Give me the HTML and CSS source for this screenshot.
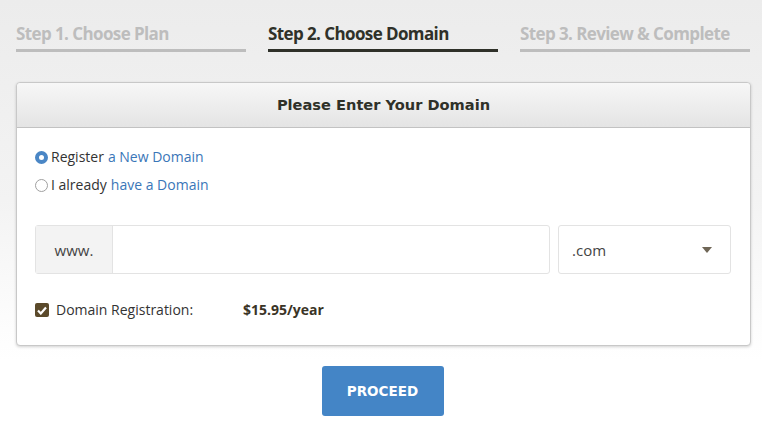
FILE: index.html
```html
<!DOCTYPE html>
<html>
<head>
<meta charset="utf-8">
<link rel="stylesheet" href="styles.css">
</head>
<body>
<div class="page">
  <nav class="steps">
    <div class="step">Step 1. Choose Plan</div>
    <div class="step active">Step 2. Choose Domain</div>
    <div class="step">Step 3. Review &amp; Complete</div>
  </nav>
  <section class="panel">
    <header class="panel-head">Please Enter Your Domain</header>
    <div class="panel-body">
      <div class="options">
        <label class="opt"><span class="radio checked"></span>Register <span class="link">a New Domain</span></label>
        <label class="opt"><span class="radio"></span>I already <span class="link">have a Domain</span></label>
      </div>
      <div class="domain-row">
        <div class="input-group">
          <span class="addon">www.</span>
          <span class="field"></span>
        </div>
        <div class="select">
          <span>.com</span>
          <svg class="caret" width="10" height="6" viewBox="0 0 10 6"><path d="M0 0h10L5 6z" fill="#6f6656"/></svg>
        </div>
      </div>
      <div class="reg-row">
        <span class="checkbox"><svg width="10" height="9" viewBox="0 0 10 9"><path d="M1 4.5l2.8 3L9 1.5" fill="none" stroke="#fff" stroke-width="2.2"/></svg></span>
        <span class="reg-label">Domain Registration:</span>
        <span class="price">$15.95/year</span>
      </div>
    </div>
  </section>
  <div class="actions">
    <button class="proceed">PROCEED</button>
  </div>
</div>
</body>
</html>
```
FILE: styles.css
```css
* { box-sizing: border-box; }
html, body { margin: 0; padding: 0; }
body {
  width: 762px;
  height: 425px;
  overflow: hidden;
  font-family: "Open Sans", "Liberation Sans", sans-serif;
  background: linear-gradient(to bottom, #ececec 0px, #f3f3f3 200px, #fdfdfd 330px, #ffffff 360px);
  color: #333;
}
.page { padding: 0 12px 0 16px; }
.steps {
  display: flex;
  gap: 22px;
  padding-top: 23px;
}
.step {
  width: 230px;
  font-weight: 700;
  font-size: 17px;
  letter-spacing: -0.6px;
  color: #bdbdbd;
  padding-bottom: 5px;
  border-bottom: 3px solid #bdbdbd;
  line-height: 21px;
  white-space: nowrap;
}
.step.active { color: #2f3129; border-bottom-color: #2f3129; }
.panel {
  margin-top: 30px;
  width: 735px;
  background: #fff;
  border: 1px solid #c8c8c8;
  border-radius: 4px;
  box-shadow: 0 1px 3px rgba(0,0,0,0.18);
}
.panel-head {
  height: 45px;
  background: linear-gradient(to bottom, #f7f7f7, #e4e4e4);
  border-bottom: 1px solid #c2c2c2;
  border-radius: 4px 4px 0 0;
  text-align: center;
  font-family: "DejaVu Sans", sans-serif;
  font-weight: 700;
  font-size: 14.6px;
  line-height: 44px;
  color: #2f3129;
}
.panel-body { padding: 19px 18px 25px 18px; }
.options { display: flex; flex-direction: column; gap: 8px; }
.opt {
  display: flex;
  align-items: center;
  font-size: 14px;
  line-height: 20px;
  color: #333;
}
.link { color: #3a76b8; margin-left: 4px; }
.radio {
  width: 13px; height: 13px;
  border: 1px solid #a0a0a0;
  border-radius: 50%;
  margin-right: 3px;
  background: #fff;
}
.radio.checked {
  border: 4px solid #4a86c5;
  background: #fff;
}
.domain-row {
  display: flex;
  gap: 8px;
  margin-top: 30px;
}
.input-group {
  display: flex;
  width: 515px;
  height: 49px;
  border: 1px solid #e3e3e3;
  border-radius: 3px;
}
.addon {
  width: 77px;
  background: #f3f3f3;
  border-right: 1px solid #e3e3e3;
  display: flex;
  align-items: center;
  justify-content: center;
  font-size: 15px;
  color: #444;
}
.field { flex: 1; }
.select {
  width: 173px;
  height: 49px;
  border: 1px solid #e3e3e3;
  border-radius: 3px;
  display: flex;
  align-items: center;
  justify-content: space-between;
  padding: 0 18px 0 13px;
  font-size: 15px;
  color: #444;
}
.reg-row {
  display: flex;
  align-items: center;
  margin-top: 26px;
  font-size: 14px;
  line-height: 20px;
}
.checkbox {
  width: 14px; height: 14px;
  background: #5b4a2b;
  border-radius: 2px;
  display: flex;
  align-items: center;
  justify-content: center;
  margin-right: 7px;
}
.reg-label { width: 187px; color: #333; }
.price { font-weight: 700; color: #3a3426; }
.actions { display: flex; justify-content: center; padding-right: 1px; margin-top: 20px; }
.proceed {
  width: 122px;
  height: 50px;
  background: #4485c6;
  border: none;
  border-radius: 3px;
  color: #fff;
  font-family: "DejaVu Sans", sans-serif;
  font-weight: 700;
  font-size: 13.5px;
}
```
